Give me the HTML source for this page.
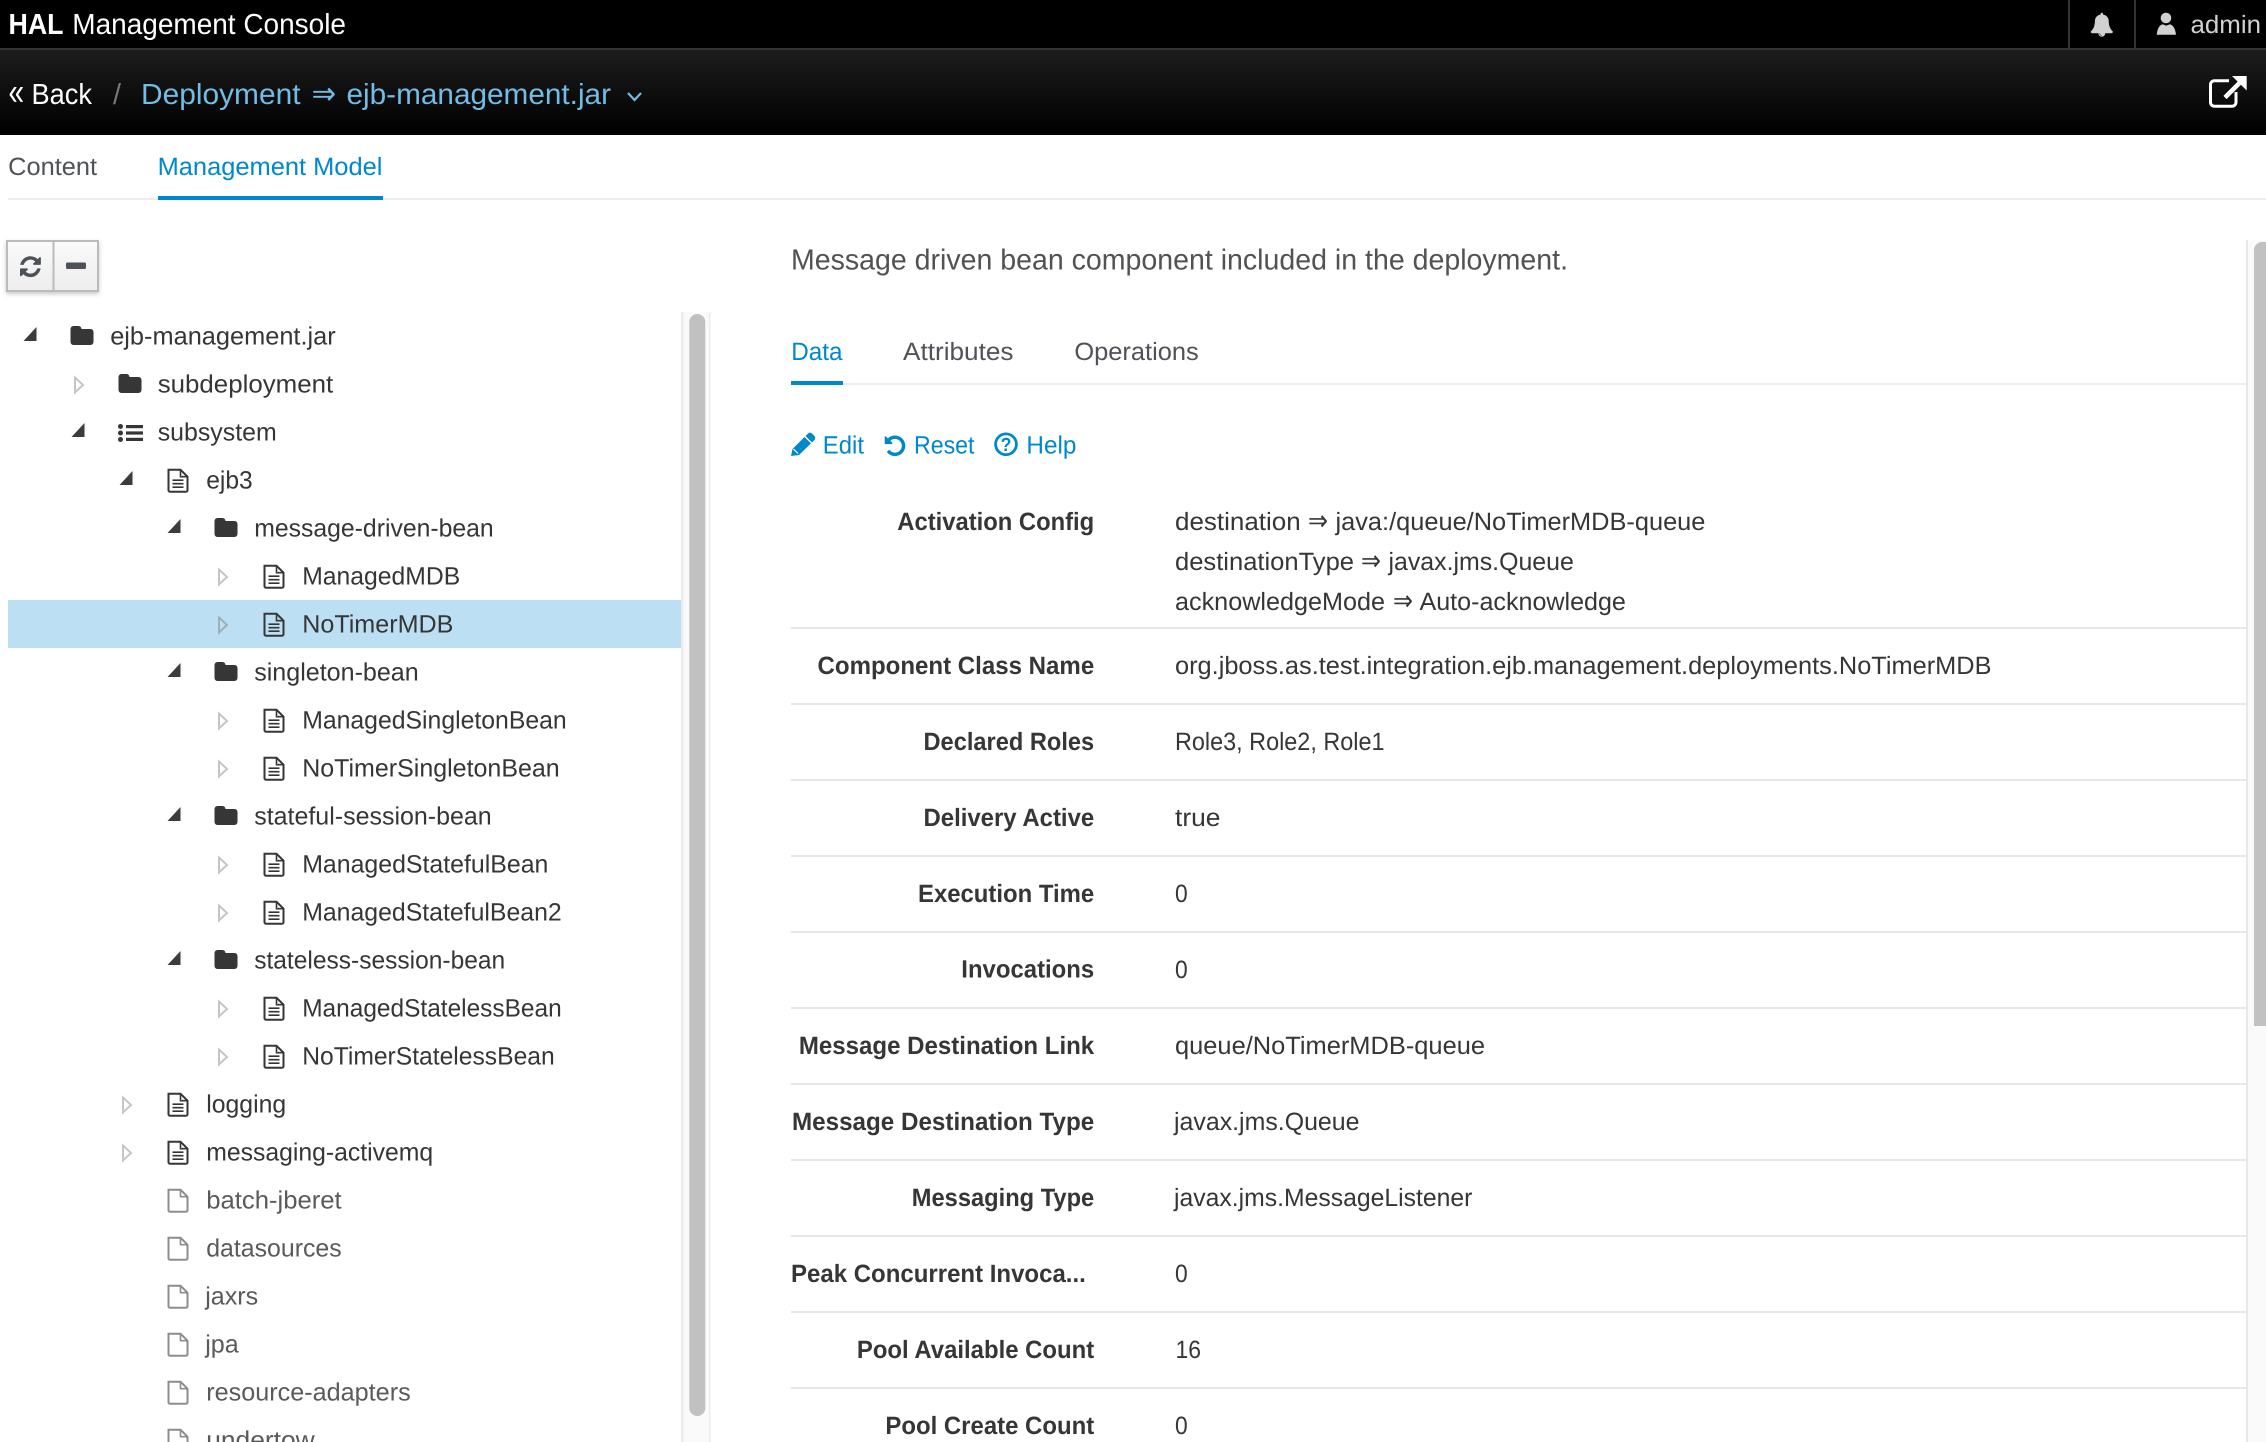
<!DOCTYPE html>
<html><head><meta charset="utf-8"><title>HAL Management Console</title>
<style>
html,body{margin:0;padding:0;background:#fff;width:2266px;height:1442px;overflow:hidden}
svg{display:block}
text{font-family:"Liberation Sans",sans-serif;font-size:25px;fill:#363636;text-rendering:geometricPrecision}
.b{font-weight:bold}
.g{fill:#5a5a5a}
.a{fill:#0088ce}
.n{fill:#4f5257}
#tree text{transform:translate(-.3px,-.6px)}
</style></head><body>
<svg xmlns="http://www.w3.org/2000/svg" width="2266" height="1442" viewBox="0 0 2266 1442">
<defs>
<linearGradient id="hd" x1="0" y1="0" x2="0" y2="1"><stop offset="0" stop-color="#1c1c1c"/><stop offset="1" stop-color="#000"/></linearGradient>
<linearGradient id="bt" x1="0" y1="0" x2="0" y2="1"><stop offset="0" stop-color="#fafafa"/><stop offset="1" stop-color="#ededed"/></linearGradient>
<filter id="sh" x="-20%" y="-20%" width="140%" height="150%"><feDropShadow dx="0" dy="2" stdDeviation="2" flood-color="#000" flood-opacity=".22"/></filter>
<g id="ae"><path d="M-74 15V29H-87Z" fill="#3c3c3c"/></g>
<g id="ac"><path d="M-83.5 17.5L-75.5 25L-83.5 32.5Z" fill="none" stroke="#c6c6c6" stroke-width="2"/></g>
<g id="acd"><path d="M-83.5 17.5L-75.5 25L-83.5 32.5Z" fill="none" stroke="#a4adb3" stroke-width="2"/></g>
<g id="fo"><path transform="translate(-40,14)" d="M0 3a3 3 0 0 1 3-3h5a3 3 0 0 1 3 3h9a3 3 0 0 1 3 3v10a3 3 0 0 1-3 3H3a3 3 0 0 1-3-3z" fill="#363636"/></g>
<g id="ft"><g transform="translate(-39,12.7)" fill="none" stroke="#363636"><path d="M1 1H13L20 8V21.5A1.5 1.5 0 0 1 18.5 23H2.5A1.5 1.5 0 0 1 1 21.5Z" stroke-width="2"/><path d="M13 1V8H20" stroke-width="1.6"/><path d="M5 11.5H16M5 15H16M5 18.5H16" stroke-width="1.6"/></g></g>
<g id="ff"><g transform="translate(-39,12.7)" fill="none" stroke="#8d8d8d"><path d="M1 1H13L20 8V21.5A1.5 1.5 0 0 1 18.5 23H2.5A1.5 1.5 0 0 1 1 21.5Z" stroke-width="2"/><path d="M13 1V8H20" stroke-width="1.6"/></g></g>
<g id="li"><g transform="translate(-40.5,16)" fill="#363636"><circle cx="2.5" cy="2.5" r="2.5"/><circle cx="2.5" cy="9" r="2.5"/><circle cx="2.5" cy="15.5" r="2.5"/><rect x="8" y="1" width="17" height="3.2"/><rect x="8" y="7.4" width="17" height="3.2"/><rect x="8" y="13.8" width="17" height="3.2"/></g></g>
</defs>

<!-- header -->
<rect width="2266" height="48" fill="#000"/>
<rect y="48" width="2266" height="2" fill="#333"/>
<rect y="50" width="2266" height="85" fill="url(#hd)"/>
<rect x="2068" width="2" height="48" fill="#333"/>
<rect x="2134" width="2" height="48" fill="#333"/>
<text x="8.5" y="34" class="b" style="font-size:29px;fill:#fff" textLength="55" lengthAdjust="spacingAndGlyphs">HAL</text>
<text x="72.3" y="34" style="font-size:29px;fill:#fff" textLength="273.7" lengthAdjust="spacingAndGlyphs">Management Console</text>
<path transform="translate(2089.8,12.7) scale(.0134)" d="M912 1696q0-16-16-16-59 0-101.5-42.5t-42.5-101.5q0-16-16-16t-16 16q0 73 51.5 124.5t124.5 51.5q16 0 16-16zm816-288q0 52-38 90t-90 38h-448q0 106-75 181t-181 75-181-75-75-181h-448q-52 0-90-38t-38-90q50-42 91-88t85-119.5 74.5-158.5 50-206 19.5-260q0-152 117-282.5t307-158.5q-8-19-8-39 0-40 28-68t68-28 68 28 28 68q0 20-8 39 190 28 307 158.5t117 282.5q0 139 19.5 260t50 206 74.5 158.5 85 119.5 91 88z" fill="#d1d1d1"/>
<circle cx="2166" cy="18" r="5.3" fill="#d1d1d1"/>
<path d="M2156.7 34.7Q2157.5 26 2162.5 24.3L2166.3 25.6 2170 24.3Q2175 26 2176 34.7Z" fill="#d1d1d1"/>
<text x="2190.5" y="33" style="fill:#d1d1d1" textLength="70.5" lengthAdjust="spacingAndGlyphs">admin</text>

<text x="8.5" y="104.5" style="font-size:38px;fill:#fff" textLength="15.5" lengthAdjust="spacingAndGlyphs">«</text>
<text x="31.5" y="104" style="font-size:29px;fill:#fff" textLength="60.5" lengthAdjust="spacingAndGlyphs">Back</text>
<text x="113" y="104" style="font-size:29px;fill:#777" textLength="8" lengthAdjust="spacingAndGlyphs">/</text>
<text x="141" y="104" style="font-size:29px;fill:#72bce6" textLength="159.5" lengthAdjust="spacingAndGlyphs">Deployment</text>
<text x="311.6" y="104" style="font-size:31px;fill:#72bce6" textLength="24.5" lengthAdjust="spacingAndGlyphs">⇒</text>
<text x="346.5" y="104" style="font-size:29px;fill:#72bce6" textLength="264.5" lengthAdjust="spacingAndGlyphs">ejb-management.jar</text>
<path d="M628 93L634.5 100L641 93" fill="none" stroke="#72bce6" stroke-width="2.2"/>
<path d="M2229 80.7H2214.5A4 4 0 0 0 2210.5 84.7V102.2A4 4 0 0 0 2214.5 106.2H2232A4 4 0 0 0 2236 102.2V92" fill="none" stroke="#fff" stroke-width="3"/>
<path d="M2225 97.5L2240 82.5" fill="none" stroke="#fff" stroke-width="4.5"/>
<path d="M2232 76H2246.7V90.5Z" fill="#fff"/>

<!-- main tabs -->
<rect x="8" y="198" width="2258" height="2" fill="#ededed"/>
<rect x="158" y="196" width="225" height="4" fill="#0088ce"/>
<text x="8.2" y="175" class="n" textLength="88.8" lengthAdjust="spacingAndGlyphs">Content</text>
<text x="157.6" y="175" class="a" textLength="224.8" lengthAdjust="spacingAndGlyphs">Management Model</text>

<!-- tree toolbar -->
<g filter="url(#sh)"><rect x="7" y="241" width="91" height="50" fill="url(#bt)" stroke="#bbb" stroke-width="2"/></g>
<rect x="52.5" y="241" width="2" height="50" fill="#bbb"/>
<path transform="translate(20,256.2) scale(.0136)" d="M1511 928q0 5-1 7-64 268-268 434.5t-478 166.5q-146 0-282.5-55t-243.5-157l-129 129q-19 19-45 19t-45-19-19-45v-448q0-26 19-45t45-19h448q26 0 45 19t19 45-19 45l-137 137q71 66 161 102t187 36q134 0 250-65t186-179q11-17 53-117 8-23 30-23h192q13 0 22.5 9.5t9.5 22.5zm25-800v448q0 26-19 45t-45 19h-448q-26 0-45-19t-19-45 19-45l138-138q-148-137-349-137-134 0-250 65t-186 179q-11 17-53 117-8 23-30 23h-199q-13 0-22.5-9.5t-9.5-22.5v-7q65-268 270-434.5t480-166.5q146 0 284 55.5t245 156.5l130-129q19-19 45-19t45 19 19 45z" fill="#4d5258"/>
<rect x="66" y="262.5" width="20" height="6.5" rx="1.5" fill="#4d5258"/>

<!-- tree scrollbar -->
<rect x="681" y="312" width="29" height="1130" fill="#fafafa"/>
<rect x="681" y="312" width="2.5" height="1130" fill="#ececec"/>
<rect x="709" y="312" width="1.5" height="1130" fill="#ececec"/>
<rect x="689.3" y="314" width="16" height="1102" rx="8" fill="#c1c1c1"/>

<!-- selected row -->
<rect x="8" y="600" width="673" height="48" fill="#bcdff3"/>

<!-- tree -->
<g id="tree">
<use href="#ae" x="110.5" y="312"/><use href="#fo" x="110.5" y="312"/>
<text x="110.5" y="345" textLength="225.5" lengthAdjust="spacingAndGlyphs">ejb-management.jar</text>
<use href="#ac" x="158.5" y="360"/><use href="#fo" x="158.5" y="360"/>
<text x="158" y="393" textLength="175.5" lengthAdjust="spacingAndGlyphs">subdeployment</text>
<use href="#ae" x="158.5" y="408"/><use href="#li" x="158.5" y="408"/>
<text x="158" y="441" textLength="119" lengthAdjust="spacingAndGlyphs">subsystem</text>
<use href="#ae" x="206.5" y="456"/><use href="#ft" x="206.5" y="456"/>
<text x="206.5" y="489" textLength="46.5" lengthAdjust="spacingAndGlyphs">ejb3</text>
<use href="#ae" x="254.5" y="504"/><use href="#fo" x="254.5" y="504"/>
<text x="254.5" y="537" textLength="239.5" lengthAdjust="spacingAndGlyphs">message-driven-bean</text>
<use href="#ac" x="302.5" y="552"/><use href="#ft" x="302.5" y="552"/>
<text x="302.5" y="585" textLength="158" lengthAdjust="spacingAndGlyphs">ManagedMDB</text>
<use href="#acd" x="302.5" y="600"/><use href="#ft" x="302.5" y="600"/>
<text x="302.5" y="633" textLength="151.2" lengthAdjust="spacingAndGlyphs">NoTimerMDB</text>
<use href="#ae" x="254.5" y="648"/><use href="#fo" x="254.5" y="648"/>
<text x="254.5" y="681" textLength="164.5" lengthAdjust="spacingAndGlyphs">singleton-bean</text>
<use href="#ac" x="302.5" y="696"/><use href="#ft" x="302.5" y="696"/>
<text x="302.5" y="729" textLength="264.5" lengthAdjust="spacingAndGlyphs">ManagedSingletonBean</text>
<use href="#ac" x="302.5" y="744"/><use href="#ft" x="302.5" y="744"/>
<text x="302.5" y="777" textLength="257.5" lengthAdjust="spacingAndGlyphs">NoTimerSingletonBean</text>
<use href="#ae" x="254.5" y="792"/><use href="#fo" x="254.5" y="792"/>
<text x="254.5" y="825" textLength="237.5" lengthAdjust="spacingAndGlyphs">stateful-session-bean</text>
<use href="#ac" x="302.5" y="840"/><use href="#ft" x="302.5" y="840"/>
<text x="302.5" y="873" textLength="246.2" lengthAdjust="spacingAndGlyphs">ManagedStatefulBean</text>
<use href="#ac" x="302.5" y="888"/><use href="#ft" x="302.5" y="888"/>
<text x="302.5" y="921" textLength="259.5" lengthAdjust="spacingAndGlyphs">ManagedStatefulBean2</text>
<use href="#ae" x="254.5" y="936"/><use href="#fo" x="254.5" y="936"/>
<text x="254.5" y="969" textLength="251" lengthAdjust="spacingAndGlyphs">stateless-session-bean</text>
<use href="#ac" x="302.5" y="984"/><use href="#ft" x="302.5" y="984"/>
<text x="302.5" y="1017" textLength="259.5" lengthAdjust="spacingAndGlyphs">ManagedStatelessBean</text>
<use href="#ac" x="302.5" y="1032"/><use href="#ft" x="302.5" y="1032"/>
<text x="302.5" y="1065" textLength="252.5" lengthAdjust="spacingAndGlyphs">NoTimerStatelessBean</text>
<use href="#ac" x="206.5" y="1080"/><use href="#ft" x="206.5" y="1080"/>
<text x="206.5" y="1113" textLength="80" lengthAdjust="spacingAndGlyphs">logging</text>
<use href="#ac" x="206.5" y="1128"/><use href="#ft" x="206.5" y="1128"/>
<text x="206.5" y="1161" textLength="227" lengthAdjust="spacingAndGlyphs">messaging-activemq</text>
<use href="#ff" x="206.5" y="1176"/>
<text x="206.5" y="1209" class="g" textLength="135.5" lengthAdjust="spacingAndGlyphs">batch-jberet</text>
<use href="#ff" x="206.5" y="1224"/>
<text x="206.5" y="1257" class="g" textLength="135.5" lengthAdjust="spacingAndGlyphs">datasources</text>
<use href="#ff" x="206.5" y="1272"/>
<text x="205.5" y="1305" class="g" textLength="53" lengthAdjust="spacingAndGlyphs">jaxrs</text>
<use href="#ff" x="206.5" y="1320"/>
<text x="205.5" y="1353" class="g" textLength="33.5" lengthAdjust="spacingAndGlyphs">jpa</text>
<use href="#ff" x="206.5" y="1368"/>
<text x="206.5" y="1401" class="g" textLength="204.5" lengthAdjust="spacingAndGlyphs">resource-adapters</text>
<use href="#ff" x="206.5" y="1416"/>
<text x="206.5" y="1449" class="g" textLength="108.5" lengthAdjust="spacingAndGlyphs">undertow</text>
</g>

<!-- right panel -->
<text x="791" y="269.5" style="font-size:29px;fill:#525252" textLength="777" lengthAdjust="spacingAndGlyphs">Message driven bean component included in the deployment.</text>

<rect x="791" y="383" width="1455" height="2" fill="#ededed"/>
<rect x="791" y="381" width="52" height="4" fill="#0088ce"/>
<text x="791.2" y="360" class="a" textLength="51.3" lengthAdjust="spacingAndGlyphs">Data</text>
<text x="903" y="360" class="n" textLength="110.5" lengthAdjust="spacingAndGlyphs">Attributes</text>
<text x="1074.4" y="360" class="n" textLength="124.3" lengthAdjust="spacingAndGlyphs">Operations</text>

<path d="M791 456L792.5 449L808 433.5Q810 431.7 812 433.5L814.5 436Q816 438 814.5 440L799 455Z" fill="#0088ce"/>
<path d="M805 436.5L811.5 443" stroke="#fff" stroke-width="1.4"/>
<path d="M793.5 449L798 453.5" stroke="#fff" stroke-width="1.2"/>
<text x="822.8" y="453.3" class="a" textLength="41.2" lengthAdjust="spacingAndGlyphs">Edit</text>
<path transform="translate(884.7,435.5) scale(.0134)" d="M1536 768q0 156-61 298t-164 245-245 164-298 61q-172 0-327-72.5t-264-204.5q-7-10-6.5-22.5t8.5-20.5l137-138q10-9 25-9 16 2 23 12 73 95 179 147t225 52q104 0 198.5-40.5t163.5-109.5 109.5-163.5 40.5-198.5-40.5-198.5-109.5-163.5-163.5-109.5-198.5-40.5q-98 0-188 35.5t-160 101.5l137 138q31 30 14 69-17 40-59 40h-448q-26 0-45-19t-19-45v-448q0-42 40-59 39-17 69 14l130 129q107-101 244.5-156.5t284.5-55.5q156 0 298 61t245 164 164 245 61 298z" fill="#0088ce"/>
<text x="914" y="453.3" class="a" textLength="60.5" lengthAdjust="spacingAndGlyphs">Reset</text>
<circle cx="1006" cy="444.3" r="10.4" fill="none" stroke="#0088ce" stroke-width="2.8"/>
<text x="1000.6" y="451" class="b a" style="font-size:19px" textLength="10.8" lengthAdjust="spacingAndGlyphs">?</text>
<text x="1026.4" y="453.3" class="a" textLength="50" lengthAdjust="spacingAndGlyphs">Help</text>

<!-- data rows -->
<g fill="#e8e8e8">
<rect x="791" y="627" width="1455" height="2"/><rect x="791" y="703" width="1455" height="2"/><rect x="791" y="779" width="1455" height="2"/><rect x="791" y="855" width="1455" height="2"/><rect x="791" y="931" width="1455" height="2"/><rect x="791" y="1007" width="1455" height="2"/><rect x="791" y="1083" width="1455" height="2"/><rect x="791" y="1159" width="1455" height="2"/><rect x="791" y="1235" width="1455" height="2"/><rect x="791" y="1311" width="1455" height="2"/><rect x="791" y="1387" width="1455" height="2"/>
</g>
<g>
<text x="897.3" y="530" class="b" textLength="196.9" lengthAdjust="spacingAndGlyphs">Activation Config</text>
<text x="1175" y="530" textLength="125.7" lengthAdjust="spacingAndGlyphs">destination</text>
<text x="1308" y="530" style="font-size:28px" textLength="20" lengthAdjust="spacingAndGlyphs">⇒</text>
<text x="1335.5" y="530" textLength="369.9" lengthAdjust="spacingAndGlyphs">java:/queue/NoTimerMDB-queue</text>
<text x="1175" y="570" textLength="179" lengthAdjust="spacingAndGlyphs">destinationType</text>
<text x="1361" y="570" style="font-size:28px" textLength="20" lengthAdjust="spacingAndGlyphs">⇒</text>
<text x="1388.5" y="570" textLength="185.3" lengthAdjust="spacingAndGlyphs">javax.jms.Queue</text>
<text x="1175" y="610" textLength="210" lengthAdjust="spacingAndGlyphs">acknowledgeMode</text>
<text x="1393" y="610" style="font-size:28px" textLength="20" lengthAdjust="spacingAndGlyphs">⇒</text>
<text x="1419.5" y="610" textLength="206.4" lengthAdjust="spacingAndGlyphs">Auto-acknowledge</text>
<text x="817.5" y="674" class="b" textLength="276.7" lengthAdjust="spacingAndGlyphs">Component Class Name</text>
<text x="1175" y="674" textLength="816.5" lengthAdjust="spacingAndGlyphs">org.jboss.as.test.integration.ejb.management.deployments.NoTimerMDB</text>
<text x="923.5" y="750" class="b" textLength="170.7" lengthAdjust="spacingAndGlyphs">Declared Roles</text>
<text x="1175" y="750" textLength="209.5" lengthAdjust="spacingAndGlyphs">Role3, Role2, Role1</text>
<text x="923.5" y="826" class="b" textLength="170.7" lengthAdjust="spacingAndGlyphs">Delivery Active</text>
<text x="1175" y="826" textLength="45.5" lengthAdjust="spacingAndGlyphs">true</text>
<text x="918" y="902" class="b" textLength="176.2" lengthAdjust="spacingAndGlyphs">Execution Time</text>
<text x="1175" y="902" textLength="12.7" lengthAdjust="spacingAndGlyphs">0</text>
<text x="961.3" y="977.6" class="b" textLength="132.9" lengthAdjust="spacingAndGlyphs">Invocations</text>
<text x="1175" y="978" textLength="12.7" lengthAdjust="spacingAndGlyphs">0</text>
<text x="798.9" y="1054" class="b" textLength="295.3" lengthAdjust="spacingAndGlyphs">Message Destination Link</text>
<text x="1175" y="1054" textLength="310" lengthAdjust="spacingAndGlyphs">queue/NoTimerMDB-queue</text>
<text x="792" y="1130" class="b" textLength="302.2" lengthAdjust="spacingAndGlyphs">Message Destination Type</text>
<text x="1174" y="1130" textLength="185.5" lengthAdjust="spacingAndGlyphs">javax.jms.Queue</text>
<text x="911.8" y="1206" class="b" textLength="182.4" lengthAdjust="spacingAndGlyphs">Messaging Type</text>
<text x="1174" y="1206" textLength="298.4" lengthAdjust="spacingAndGlyphs">javax.jms.MessageListener</text>
<text x="791" y="1282" class="b" textLength="294.8" lengthAdjust="spacingAndGlyphs">Peak Concurrent Invoca...</text>
<text x="1175" y="1282" textLength="12.7" lengthAdjust="spacingAndGlyphs">0</text>
<text x="856.9" y="1358" class="b" textLength="237.3" lengthAdjust="spacingAndGlyphs">Pool Available Count</text>
<text x="1175.5" y="1358" textLength="25.5" lengthAdjust="spacingAndGlyphs">16</text>
<text x="885.4" y="1434" class="b" textLength="208.8" lengthAdjust="spacingAndGlyphs">Pool Create Count</text>
<text x="1175" y="1434" textLength="12.7" lengthAdjust="spacingAndGlyphs">0</text>
</g>

<!-- page scrollbar -->
<rect x="2246" y="240" width="20" height="1202" fill="#fafafa"/>
<rect x="2246" y="240" width="2" height="1202" fill="#e8e8e8"/>
<path d="M2254 1026V250a8 8 0 0 1 8-8h4V1026Z" fill="#c1c1c1"/>
</svg>
</body></html>
